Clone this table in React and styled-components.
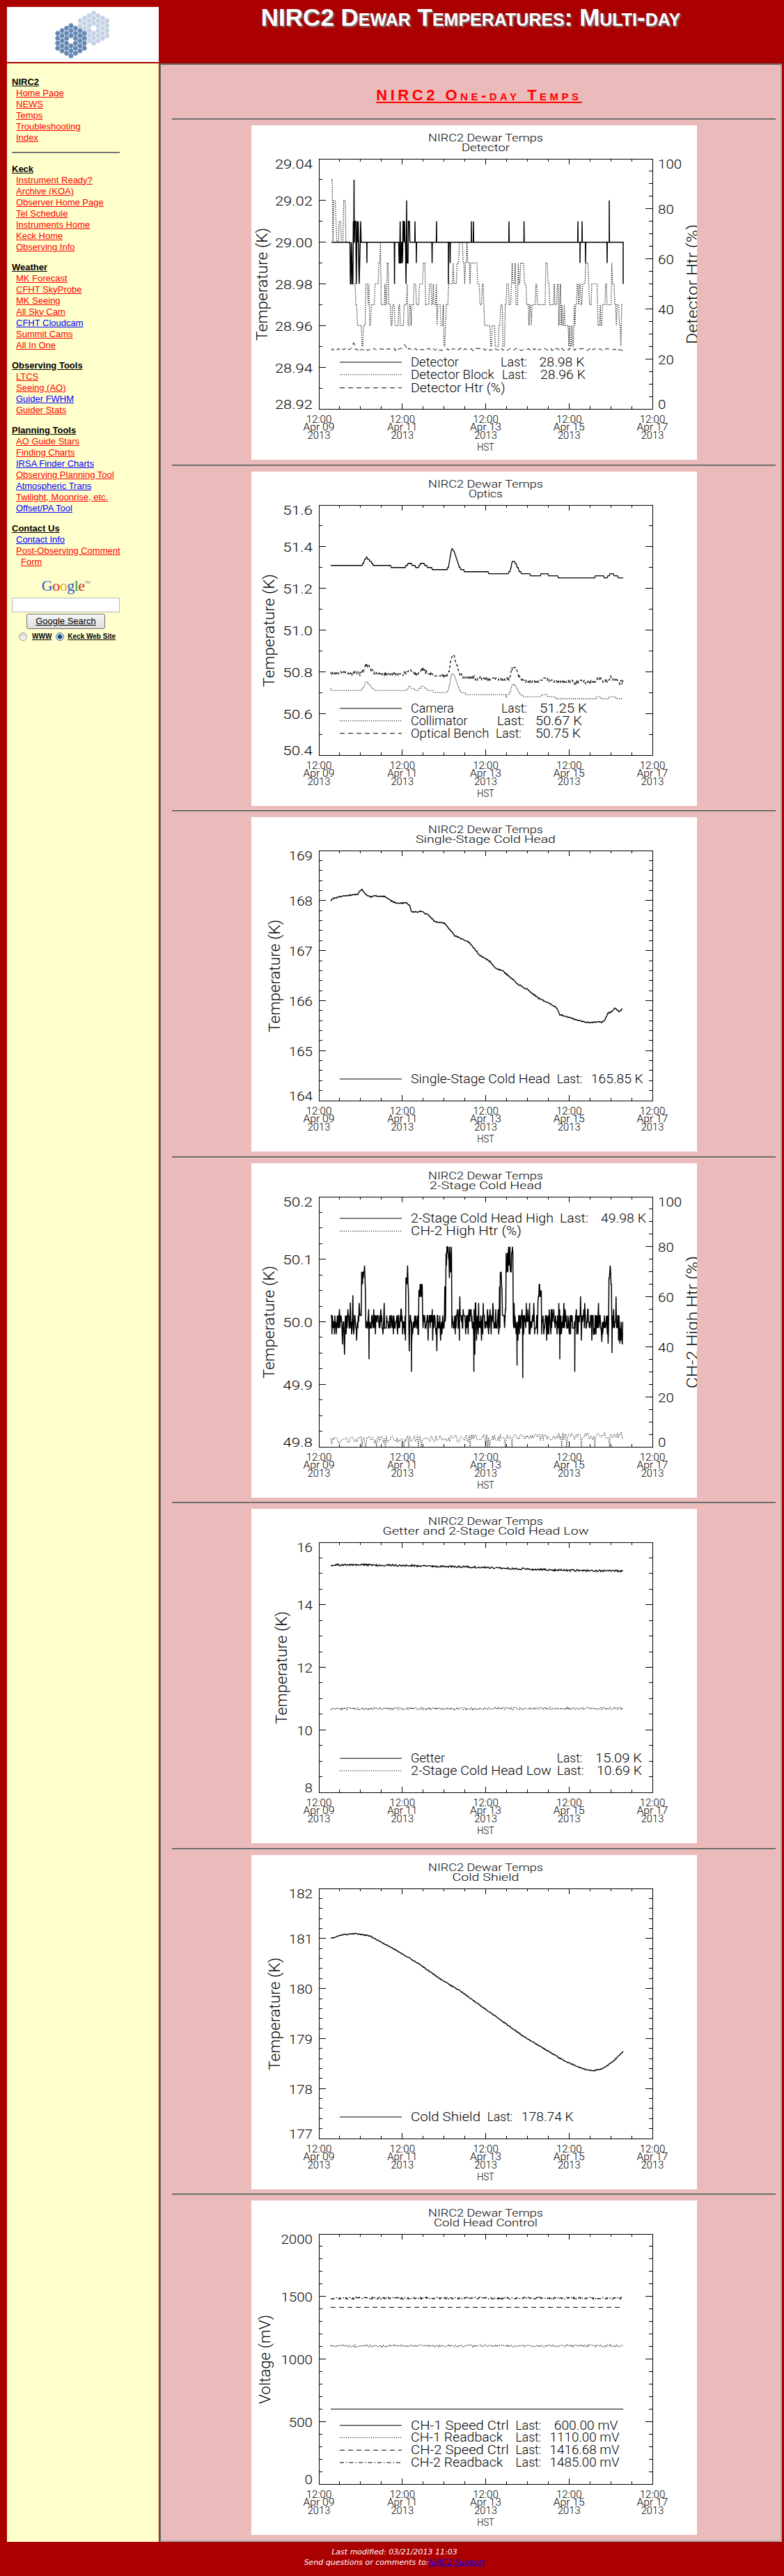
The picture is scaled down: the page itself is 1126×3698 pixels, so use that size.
import { Fragment } from "react"
import styled, { createGlobalStyle } from "styled-components"

const GlobalStyle = createGlobalStyle`
  html, body {
    margin: 0;
    padding: 0;
    background: #aa0000;
  }
  body {
    font-family: "Liberation Sans", Arial, sans-serif;
  }
`

const Page = styled.div`
  padding: 10px 3px 0 10px;
`

const HeaderRow = styled.div`
  display: grid;
  grid-template-columns: 218px 1fr;
  column-gap: 1px;
  height: 79px;
`

const LogoBox = styled.div`
  background: #fff;
  height: 79px;
  svg {
    display: block;
  }
`

const PageTitle = styled.h1`
  margin: -3px 0 0;
  text-align: center;
  color: #fff;
  font: bold 35px/35px "Liberation Sans", Arial, sans-serif;
  font-variant: small-caps;
  text-shadow: 2px 2px 2px #777;
`

const MainRow = styled.div`
  display: grid;
  grid-template-columns: 218px 1fr;
  column-gap: 1px;
  margin-top: 2px;
`

const Sidebar = styled.nav`
  background: #ffffcc;
  padding: 19px 0 0 7px;
`

const SideInner = styled.div`
  width: 160px;
`

const NavGroup = styled.div`
  margin-bottom: ${p => (p.$first ? "0" : "13px")};
`

const NavHead = styled.a`
  display: block;
  color: #000;
  font: bold 13px/16px "Liberation Sans", Arial, sans-serif;
  text-decoration: underline;
`

const NavLink = styled.a`
  display: block;
  padding-left: 13px;
  text-indent: -7px;
  color: ${p => (p.$blue ? "#0000ff" : "#ff0000")};
  font: 13px/16px "Liberation Sans", Arial, sans-serif;
  text-decoration: underline;
`

const SideRule = styled.hr`
  width: 155px;
  margin: 12px 0 14.7px;
  height: 0;
  border: 0;
  border-top: 1px solid #555;
  border-bottom: 1px solid #999;
`

const Search = styled.form`
  width: 155px;
  margin: 1.3px 0 0;
  display: flex;
  flex-direction: column;
  align-items: center;
`

const GoogleMark = styled.div`
  font: 22px/26px "Liberation Serif", "Times New Roman", serif;
  letter-spacing: -0.5px;
  sup {
    font: 6px "Liberation Sans", Arial, sans-serif;
    color: #888;
    vertical-align: 10px;
  }
`

const Letter = styled.span`
  color: ${p => p.$c};
`

const SearchInput = styled.input`
  box-sizing: border-box;
  width: 155px;
  height: 21px;
  margin: 4px 0 0;
  padding: 0 2px;
  border: 1px solid #b8b8b8;
  background: #fff;
`

const SearchButton = styled.button`
  box-sizing: border-box;
  width: 113px;
  height: 22px;
  margin-top: 2px;
  padding: 0;
  border: 1px solid #707070;
  border-radius: 3px;
  background: linear-gradient(#f6f6f6, #dedede);
  font: 13px/18px "Liberation Sans", Arial, sans-serif;
  color: #000;
  text-decoration: underline;
`

const RadioRow = styled.div`
  align-self: stretch;
  display: flex;
  align-items: center;
  height: 14px;
  margin-top: 4px;
  padding-left: 10px;
  white-space: nowrap;
  font: bold 10px/14px "Liberation Sans", Arial, sans-serif;
  color: #000;
`

const Radio = styled.span`
  flex: none;
  box-sizing: border-box;
  width: 12px;
  height: 12px;
  border-radius: 50%;
  border: 1px solid ${p => (p.$on ? "#4a6a8a" : "#9a9a9a")};
  background: ${p =>
    p.$on
      ? "radial-gradient(circle, #17457e 0 2.5px, #7fa6d0 3.2px, #ececec 4.5px)"
      : "linear-gradient(#d6d6d6, #fafafa)"};
  margin-right: ${p => (p.$on ? "5px" : "7px")};
`

const RadioLabel = styled.span`
  flex: none;
  text-decoration: underline;
  margin-right: 6px;
`

const Panel = styled.main`
  background: #ebbbbb;
  border: 2px solid;
  border-color: #666 #aaa #aaa #666;
  padding: 0 7px 8px 16px;
  display: flex;
  flex-direction: column;
  align-items: center;
`

const Heading = styled.h2`
  margin: 31px 0 13.5px;
  padding-left: 15px;
  color: #ff0000;
  font: bold 22px/26px "Liberation Sans", Arial, sans-serif;
  font-variant: small-caps;
  letter-spacing: 4.5px;
  text-decoration: underline;
`

const Rule = styled.hr`
  align-self: stretch;
  margin: 6.5px 0 8px;
  height: 0;
  border: 0;
  border-top: 1px solid #555;
  border-bottom: 1px solid #8a8a8a;
`

const Plot = styled.svg`
  display: block;
  flex: none;
  background: #fff;
  font-family: Roboto, "DejaVu Sans", sans-serif;
  font-weight: 300;
  text {
    fill: #000;
  }
`

const Footer = styled.footer`
  padding: 6.5px 0 13px;
  text-align: center;
  color: #fff;
  font: italic 11px/15px "DejaVu Sans", Verdana, sans-serif;
`

const FooterLink = styled.a`
  color: #0000ff;
`

/* ---------- data helpers ---------- */

function rand(seed) {
  let s = seed >>> 0
  return () => {
    s = (s + 0x6d2b79f5) >>> 0
    let t = s
    t = Math.imul(t ^ (t >>> 15), t | 1)
    t ^= t + Math.imul(t ^ (t >>> 7), t | 61)
    return ((t ^ (t >>> 14)) >>> 0) / 4294967296
  }
}

function interp(keys, x) {
  if (x <= keys[0][0]) return keys[0][1]
  for (let i = 1; i < keys.length; i++) {
    if (x <= keys[i][0]) {
      const [x0, y0] = keys[i - 1]
      const [x1, y1] = keys[i]
      return y0 + ((y1 - y0) * (x - x0)) / (x1 - x0)
    }
  }
  return keys[keys.length - 1][1]
}

const qz = (v, s) => Math.round(v / s) * s

const sample = (from, to, step, fn) => {
  const pts = []
  for (let x = from; x <= to; x += step) pts.push([x, fn(x)])
  return pts
}

const bump = (x, c, h, rise = 5, fall = 9) => {
  const d = x - c
  const s = d < 0 ? rise : fall
  return h * Math.exp(-(d * d) / (s * s))
}

const spiky = (pts, list, base) => {
  list.forEach(([sx, sv]) => pts.push([sx - 0.35, base], [sx, sv], [sx + 0.35, base]))
  return pts.sort((a, b) => a[0] - b[0])
}

/* chart 1: detector */
const detSpikes = [
  [147.5, 29.03], [166, 28.99], [205.6, 28.98], [223, 29.02], [235, 29.01], [237, 28.99],
  [259.6, 28.99], [266, 29.01], [283, 28.98], [285.5, 28.99], [316, 29.01], [319, 29.01],
  [370, 29.01], [391.6, 29.01], [469, 29.01], [472, 28.99], [475, 29.01], [480, 28.99],
  [511, 28.99], [514, 29.02],
]

function detectorSeries() {
  const r = rand(3)
  const pts = []
  for (let x = 115; x < 534; x += 0.7) {
    let v = 29
    const busy = (x > 142 && x < 157) || (x > 211 && x < 227)
    if (busy && r() < 0.75) v = [28.98, 28.99, 29.01][Math.floor(r() * 3)]
    pts.push([x, v])
  }
  spiky(pts, detSpikes, 29)
  pts.push([534, 29], [534, 28.98])
  return pts
}

const blockKeys = [
  [115, 29.02], [120, 29.008], [138, 29.005], [145, 28.978], [160, 28.963], [172, 28.975],
  [185, 28.985], [198, 28.978], [205, 28.958], [212, 28.962], [228, 28.972], [245, 28.985],
  [262, 28.975], [270, 28.962], [283, 28.97], [298, 28.985], [315, 28.99], [325, 28.98],
  [335, 28.962], [350, 28.955], [365, 28.963], [372, 28.98], [385, 28.982], [395, 28.97],
  [405, 28.965], [415, 28.978], [432, 28.98], [442, 28.972], [452, 28.96], [462, 28.955],
  [470, 28.972], [480, 28.98], [495, 28.978], [503, 28.965], [510, 28.978], [522, 28.975],
  [534, 28.962],
]

function blockSeries() {
  const r = rand(5)
  let prev = 29.02
  return sample(115, 534, 1.1, x => {
    if (r() < 0.45) return prev
    prev = qz(interp(blockKeys, x) + (r() - 0.5) * 0.024, 0.01)
    return prev
  })
}

function htrSeries() {
  const r = rand(9)
  return sample(115, 534, 1.5, x =>
    23.8 + (r() - 0.5) * 1.0 + bump(x, 147, 3, 1.5, 1.5) + bump(x, 220, 2.2, 2, 2))
}

/* chart 2: optics */
const opBumps = [[165, 1], [227, 0.5], [245, 0.6], [288.5, 2.5], [376, 1.5], [420, 0.35], [498, 0.25], [517, 0.45]]
const bumps = (x, k) => opBumps.reduce((s, [c, h]) => s + bump(x, c, h * k, 4, 8), 0)

const camBase = [[114, 51.31], [200, 51.305], [280, 51.29], [340, 51.275], [400, 51.265], [440, 51.255], [534, 51.25]]
const colBase = [[114, 50.715], [260, 50.705], [330, 50.69], [400, 50.68], [470, 50.67], [534, 50.665]]
const benchBase = [[114, 50.795], [260, 50.785], [330, 50.77], [400, 50.755], [534, 50.75]]

const cameraSeries = () => sample(114, 534, 1, x => qz(interp(camBase, x) + bumps(x, 0.04), 0.01))
const collimatorSeries = () => sample(114, 534, 1, x => qz(interp(colBase, x) + bumps(x, 0.038), 0.01))
function benchSeries() {
  const r = rand(17)
  return sample(114, 534, 1, x => qz(interp(benchBase, x) + bumps(x, 0.042) + (r() - 0.5) * 0.018, 0.01))
}

/* chart 3: single stage */
const ssKeys = [
  [114, 167.98], [116, 168.03], [125, 168.07], [135, 168.1], [149, 168.12], [153, 168.13],
  [155, 168.18], [159, 168.22], [165, 168.12], [171, 168.07], [175, 168.09], [192, 168.08],
  [200, 168.0], [208, 167.95], [223.7, 167.95], [227, 167.9], [230.6, 167.77], [245, 167.78],
  [255, 167.7], [262, 167.6], [269, 167.56], [277.6, 167.55], [292, 167.3], [312, 167.17],
  [328.6, 166.9], [343, 166.78], [351, 166.64], [360, 166.6], [369, 166.5], [383.7, 166.32],
  [396, 166.23], [412, 166.05], [428.6, 165.94], [438.8, 165.85], [443, 165.72], [453, 165.68],
  [469, 165.6], [485.7, 165.56], [504, 165.57], [508, 165.62], [512, 165.75], [518, 165.78],
  [522.4, 165.85], [528, 165.78], [532.7, 165.83],
]
function singleStageSeries() {
  const r = rand(41)
  return sample(114, 533, 1, x => interp(ssKeys, x) + (r() - 0.5) * 0.025)
}

/* chart 4: 2-stage */
const chPeaks = [[161, 0.09, 3], [223.7, 0.09, 2], [243, 0.07, 2.5], [283.5, 0.13, 4], [359, 0.08, 1.5], [371, 0.13, 5], [414, 0.06, 2.5], [515.5, 0.09, 2]]
const chDips = [[169, 49.94], [230, 49.92], [319.6, 49.92], [381.6, 49.93], [389.8, 49.91], [443, 49.94], [464.5, 49.92], [518, 49.95]]

function coldHeadHighSeries() {
  const r = rand(21)
  const pts = []
  for (let x = 114; x <= 534; x += 0.6) {
    const u = r()
    let v = u < 0.28 ? 50 : u < 0.53 ? 50.01 : u < 0.78 ? 49.99 : u < 0.89 ? 49.98 : u < 0.95 ? 50.02 : u < 0.975 ? 49.97 : 50.03
    if (r() < 0.025) v = 50 + (r() < 0.5 ? -1 : 1) * (0.03 + r() * 0.03)
    for (const [c, h, w] of chPeaks) {
      if (Math.abs(x - c) < w) v = Math.max(v, qz(50 + h * (0.55 + 0.45 * r()), 0.01))
    }
    pts.push([x, v])
  }
  return spiky(pts, chDips, 50)
}

function ch2HtrSeries() {
  const r = rand(33)
  return sample(114, 534, 1.4, x => {
    if (r() < 0.06) return 0
    return Math.max(0, 2.5 + ((x - 114) / 420) * 2 + (r() - 0.5) * 3)
  })
}

/* chart 5: getter */
const getterKeys = [[114, 15.27], [160, 15.28], [250, 15.24], [330, 15.2], [400, 15.14], [450, 15.1], [534, 15.08]]
function getterSeries() {
  const r = rand(51)
  return sample(114, 534, 1, x => interp(getterKeys, x) + (r() - 0.5) * 0.06)
}
function lowSeries() {
  const r = rand(52)
  return sample(114, 534, 1, x => 10.68 + (r() - 0.5) * 0.07)
}

/* chart 6: cold shield */
const csKeys = [
  [114, 181.0], [130, 181.07], [150, 181.1], [170, 181.05], [190, 180.9], [210, 180.75],
  [240, 180.5], [270, 180.2], [300, 179.95], [330, 179.65], [360, 179.35], [390, 179.05],
  [420, 178.8], [450, 178.55], [475, 178.4], [490, 178.35], [505, 178.4], [520, 178.55],
  [534, 178.74],
]
function coldShieldSeries() {
  const r = rand(61)
  return sample(114, 534, 1, x => interp(csKeys, x) + (r() - 0.5) * 0.02)
}

/* chart 7: cold head control */
function jitter(seed, level, amp, step) {
  const r = rand(seed)
  return sample(114, 534, step, () => level + (r() - 0.5) * amp)
}

const DOT = "1.2 1.8"
const DASH = "7 5"
const DASHDOT = "6 3 1.5 3"

const charts = [
  {
    sub: "Detector", subW: 69,
    y: { min: 28.92, max: 29.04, major: 0.02, minor: 2, dec: 2, title: "Temperature (K)", tx: 23, tw: 162 },
    right: { min: 0, max: 100, major: 20, minor: 4, dec: 0, title: "Detector Htr (%)", tw: 172 },
    series: [
      { pts: blockSeries(), dash: DOT, w: 1.2 },
      { pts: htrSeries(), dash: DASH, right: true },
      { pts: detectorSeries(), w: 1.5 },
    ],
    legend: [
      { y: 340, name: "Detector", nw: 69, last: [358, 38], val: "28.98 K", vx: 413.5, vw: 65 },
      { y: 357.7, dash: DOT, name: "Detector Block", nw: 119.7, last: [360, 36], val: "28.96 K", vx: 415, vw: 65 },
      { y: 376.7, dash: DASH, name: "Detector Htr (%)", nw: 135.6 },
    ],
  },
  {
    sub: "Optics", subW: 49,
    y: { min: 50.4, max: 51.6, major: 0.2, minor: 2, dec: 1, title: "Temperature (K)", tx: 32.7, tw: 162 },
    series: [
      { pts: cameraSeries(), w: 1.3 },
      { pts: collimatorSeries(), dash: DOT, w: 1.2 },
      { pts: benchSeries(), dash: "4 3", w: 1.2 },
    ],
    legend: [
      { y: 340, name: "Camera", nw: 62, last: [359, 37], val: "51.25 K", vx: 414, vw: 68 },
      { y: 357.7, dash: DOT, name: "Collimator", nw: 81.6, last: [353, 39], val: "50.67 K", vx: 408, vw: 67 },
      { y: 375.7, dash: DASH, name: "Optical Bench", nw: 112.4, last: [351, 37], val: "50.75 K", vx: 408, vw: 65 },
    ],
  },
  {
    sub: "Single-Stage Cold Head", subW: 201,
    y: { min: 164, max: 169, major: 1, minor: 5, dec: 0, title: "Temperature (K)", tx: 40.8, tw: 162 },
    series: [{ pts: singleStageSeries(), w: 1.4 }],
    legend: [
      { y: 376, name: "Single-Stage Cold Head", nw: 200, last: [438.8, 36.7], val: "165.85 K", vx: 487.8, vw: 75 },
    ],
  },
  {
    sub: "2-Stage Cold Head", subW: 161,
    y: { min: 49.8, max: 50.2, major: 0.1, minor: 4, dec: 1, title: "Temperature (K)", tx: 32.7, tw: 162 },
    right: { min: 0, max: 100, major: 20, minor: 4, dec: 0, title: "CH-2 High Htr (%)", tw: 190 },
    series: [
      { pts: ch2HtrSeries(), dash: DOT, right: true },
      { pts: coldHeadHighSeries(), w: 1.5 },
    ],
    legend: [
      { y: 79, name: "2-Stage Cold Head High", nw: 205, last: [443, 41], val: "49.98 K", vx: 502, vw: 65 },
      { y: 97.3, dash: DOT, name: "CH-2 High Htr (%)", nw: 159 },
    ],
  },
  {
    sub: "Getter and 2-Stage Cold Head Low", subW: 296,
    y: { min: 8, max: 16, major: 2, minor: 4, dec: 0, title: "Temperature (K)", tx: 51, tw: 162 },
    series: [
      { pts: getterSeries(), w: 1.3 },
      { pts: lowSeries(), dash: DOT, w: 1.2 },
    ],
    legend: [
      { y: 358.3, name: "Getter", nw: 49, last: [438.8, 36.7], val: "15.09 K", vx: 494, vw: 67 },
      { y: 376, dash: DOT, name: "2-Stage Cold Head Low", nw: 202, last: [439, 38.6], val: "10.69 K", vx: 496, vw: 65 },
    ],
  },
  {
    sub: "Cold Shield", subW: 96,
    y: { min: 177, max: 182, major: 1, minor: 5, dec: 0, title: "Temperature (K)", tx: 40.8, tw: 162 },
    series: [{ pts: coldShieldSeries(), w: 1.4 }],
    legend: [
      { y: 376, name: "Cold Shield", nw: 100, last: [338.8, 36.7], val: "178.74 K", vx: 387.8, vw: 75 },
    ],
  },
  {
    sub: "Cold Head Control", subW: 149,
    y: { min: 0, max: 2000, major: 500, minor: 5, dec: 0, title: "Voltage (mV)", tx: 26.5, tw: 128 },
    series: [
      { pts: [[114, 600], [534, 600]] },
      { pts: jitter(71, 1105, 18, 1.2), dash: DOT, w: 1.2 },
      { pts: [[114, 1413], [534, 1413]], dash: DASH },
      { pts: jitter(72, 1487, 16, 1), dash: DASHDOT, w: 1.3 },
    ],
    legend: [
      { y: 322.7, name: "CH-1 Speed Ctrl", nw: 140.8, last: [379.6, 36.7], val: "600.00 mV", vx: 434.7, vw: 91.8 },
      { y: 340.3, dash: DOT, name: "CH-1 Readback", nw: 132.4, last: [379.6, 36.7], val: "1110.00 mV", vx: 428.6, vw: 100 },
      { y: 358.3, dash: DASH, name: "CH-2 Speed Ctrl", nw: 140.8, last: [379.6, 36.7], val: "1416.68 mV", vx: 428.6, vw: 100 },
      { y: 376.3, dash: DASHDOT, name: "CH-2 Readback", nw: 132.4, last: [379.6, 36.7], val: "1485.00 mV", vx: 428.6, vw: 100 },
    ],
  },
]

/* ---------- chart drawing ---------- */

const X0 = 97
const X1 = 576
const Y0 = 48
const Y1 = 407
const PH = Y1 - Y0

const dates = [["Apr 09", 45], ["Apr 11", 43], ["Apr 13", 45], ["Apr 15", 45], ["Apr 17", 45]]

const labelWidth = s => [...s].reduce((w, c) => w + (c === "." ? 8.5 : 11.4), 0)

function Txt({ x, y, size, w, anchor = "start", transform, children }) {
  return (
    <text
      x={x}
      y={y}
      fontSize={size}
      textAnchor={anchor}
      transform={transform}
      textLength={w}
      lengthAdjust="spacingAndGlyphs"
    >
      {children}
    </text>
  )
}

function axisTicks(ax, x, dir) {
  const n = Math.round((ax.max - ax.min) / ax.major) * ax.minor
  let d = ""
  for (let i = 1; i < n; i++) {
    const yy = Y1 - (i * PH) / n
    d += `M${x} ${yy.toFixed(1)}h${(i % ax.minor ? 5 : 10) * dir}`
  }
  return d
}

function axisLabels(ax, x, anchor) {
  const n = Math.round((ax.max - ax.min) / ax.major)
  return Array.from({ length: n + 1 }, (_, i) => {
    const s = (ax.min + i * ax.major).toFixed(ax.dec)
    const ty = Math.min(Y1, Math.max(Y0 + 14, Y1 - (i * PH) / n + 7.5))
    return (
      <Txt key={s} x={x} y={ty} size={18} w={labelWidth(s)} anchor={anchor}>
        {s}
      </Txt>
    )
  })
}

function Chart({ cfg }) {
  const { sub, subW, y, right, series, legend } = cfg
  const toY = (v, ax) => Y1 - ((v - ax.min) / (ax.max - ax.min)) * PH
  const path = (pts, ax) =>
    pts.map(([x, v], i) => `${i ? "L" : "M"}${x.toFixed(2)} ${toY(v, ax).toFixed(2)}`).join("")

  let xt = ""
  for (let i = 1; i < 16; i++) {
    const x = (X0 + (i * (X1 - X0)) / 16).toFixed(1)
    const len = i % 4 ? 4 : 8
    xt += `M${x} ${Y1}v${-len}M${x} ${Y0}v${len}`
  }
  const ticks = xt + axisTicks(y, X0, 1) + (right ? axisTicks(right, X1, -1) : axisTicks(y, X1, -1))

  return (
    <Plot width="640" height="480" viewBox="0 0 640 480">
      <Txt x={336.5} y={23} size={15.5} w={165} anchor="middle">NIRC2 Dewar Temps</Txt>
      <Txt x={336.5} y={37} size={15.5} w={subW} anchor="middle">{sub}</Txt>

      <g fill="none" stroke="#000" strokeWidth="1">
        {series.map((s, i) => (
          <path
            key={i}
            d={path(s.pts, s.right ? right : y)}
            strokeWidth={s.w || 1}
            strokeDasharray={s.dash}
          />
        ))}
      </g>

      <g fill="none" stroke="#000" strokeWidth="1" shapeRendering="crispEdges">
        <rect x={X0} y={Y0} width={X1 - X0} height={PH} />
        <path d={ticks} />
      </g>

      {axisLabels(y, 88, "end")}
      {right && axisLabels(right, 584, "start")}

      <Txt transform={`translate(${y.tx} 228) rotate(-90)`} x={0} y={0} size={22} w={y.tw} anchor="middle">
        {y.title}
      </Txt>
      {right && (
        <Txt transform="translate(641 228) rotate(-90)" x={0} y={0} size={22} w={right.tw} anchor="middle">
          {right.title}
        </Txt>
      )}

      {dates.map(([d, dw], i) => {
        const x = X0 + i * 119.75
        return (
          <g key={d}>
            <Txt x={x} y={426.7} size={14} w={36.7} anchor="middle">12:00</Txt>
            <Txt x={x} y={437.8} size={14} w={dw} anchor="middle">{d}</Txt>
            <Txt x={x} y={450} size={14} w={32.6} anchor="middle">2013</Txt>
          </g>
        )
      })}
      <Txt x={336.5} y={466.7} size={14} w={24.5} anchor="middle">HST</Txt>

      {legend.map(l => (
        <g key={l.name}>
          <path d={`M127 ${l.y}H216`} stroke="#000" strokeWidth="1.1" strokeDasharray={l.dash} />
          <Txt x={229} y={l.y + 6} size={17.5} w={l.nw}>{l.name}</Txt>
          {l.last && <Txt x={l.last[0]} y={l.y + 6} size={17.5} w={l.last[1]}>Last:</Txt>}
          {l.val && <Txt x={l.vx} y={l.y + 6} size={17.5} w={l.vw}>{l.val}</Txt>}
        </g>
      ))}
    </Plot>
  )
}

/* ---------- logo ---------- */

const hexCells = (() => {
  const cells = []
  for (let q = -3; q <= 3; q++) {
    for (let r = -3; r <= 3; r++) {
      if (Math.abs(q + r) > 3 || (q === 0 && r === 0)) continue
      cells.push([q * 6.4, (r + q / 2) * 7.2])
    }
  }
  return cells
})()

const hexPoints = (cx, cy, R = 3.8) =>
  Array.from({ length: 6 }, (_, i) => {
    const a = (Math.PI / 3) * i
    return `${(cx + R * Math.cos(a)).toFixed(2)},${(cy + R * Math.sin(a)).toFixed(2)}`
  }).join(" ")

function KeckLogo() {
  return (
    <svg width="218" height="79" viewBox="0 0 218 79">
      <g fill="#c4d3e5">
        {hexCells.map(([x, y], i) => <polygon key={i} points={hexPoints(124.5 + x, 30.5 + y)} />)}
      </g>
      <g fill="#6589b3">
        {hexCells.map(([x, y], i) => <polygon key={i} points={hexPoints(92 + x, 48.5 + y)} />)}
      </g>
    </svg>
  )
}

/* ---------- sidebar ---------- */

const nav = [
  { title: "NIRC2", links: [["Home Page"], ["NEWS"], ["Temps"], ["Troubleshooting"], ["Index"]] },
  { title: "Keck", links: [["Instrument Ready?"], ["Archive (KOA)"], ["Observer Home Page"], ["Tel Schedule"], ["Instruments Home"], ["Keck Home"], ["Observing Info"]] },
  { title: "Weather", links: [["MK Forecast"], ["CFHT SkyProbe"], ["MK Seeing"], ["All Sky Cam"], ["CFHT Cloudcam", true], ["Summit Cams"], ["All In One"]] },
  { title: "Observing Tools", links: [["LTCS"], ["Seeing (AO)"], ["Guider FWHM", true], ["Guider Stats"]] },
  { title: "Planning Tools", links: [["AO Guide Stars"], ["Finding Charts"], ["IRSA Finder Charts", true], ["Observing Planning Tool"], ["Atmospheric Trans", true], ["Twilight, Moonrise, etc."], ["Offset/PA Tool", true]] },
  { title: "Contact Us", links: [["Contact Info", true], ["Post-Observing Comment Form"]] },
]

const googleLetters = [["G", "#2a56c6"], ["o", "#d22e1f"], ["o", "#e8a91b"], ["g", "#2a56c6"], ["l", "#2f9a3a"], ["e", "#d22e1f"]]

function Group({ group, first }) {
  return (
    <NavGroup $first={first}>
      <NavHead href="#">{group.title}</NavHead>
      {group.links.map(([label, blue]) => (
        <NavLink key={label} href="#" $blue={blue}>{label}</NavLink>
      ))}
    </NavGroup>
  )
}

function App() {
  return (
    <Page>
      <GlobalStyle />
      <HeaderRow>
        <LogoBox><KeckLogo /></LogoBox>
        <PageTitle>NIRC2 Dewar Temperatures: Multi-day</PageTitle>
      </HeaderRow>
      <MainRow>
        <Sidebar>
          <SideInner>
            <Group group={nav[0]} first />
            <SideRule />
            {nav.slice(1).map(g => <Group key={g.title} group={g} />)}
            <Search onSubmit={e => e.preventDefault()}>
              <GoogleMark>
                {googleLetters.map(([c, col], i) => <Letter key={i} $c={col}>{c}</Letter>)}
                <sup>TM</sup>
              </GoogleMark>
              <SearchInput type="text" />
              <SearchButton type="submit">Google Search</SearchButton>
              <RadioRow>
                <Radio />
                <RadioLabel>WWW</RadioLabel>
                <Radio $on />
                <RadioLabel>Keck Web Site</RadioLabel>
              </RadioRow>
            </Search>
          </SideInner>
        </Sidebar>
        <Panel>
          <Heading>NIRC2 One-day Temps</Heading>
          {charts.map(c => (
            <Fragment key={c.sub}>
              <Rule />
              <Chart cfg={c} />
            </Fragment>
          ))}
        </Panel>
      </MainRow>
      <Footer>
        Last modified: 03/21/2013 11:03
        <br />
        Send questions or comments to:<FooterLink href="#">NIRC2 Support</FooterLink>
      </Footer>
    </Page>
  )
}

export default App
